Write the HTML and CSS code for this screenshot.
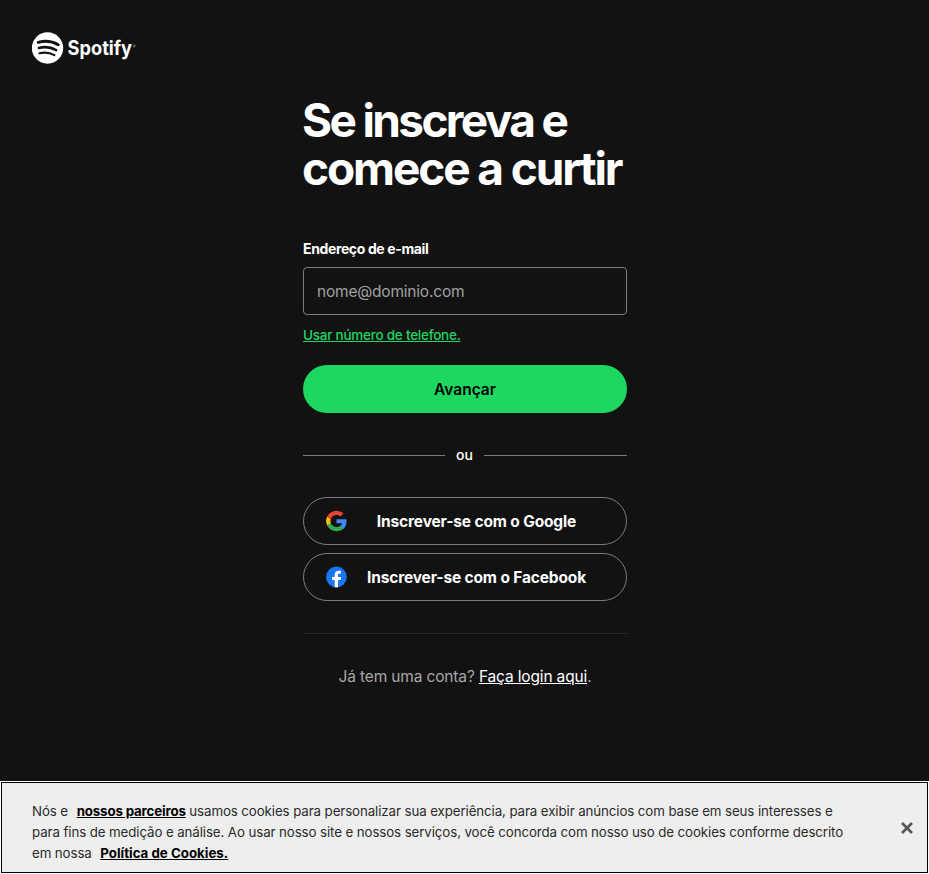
FILE: index.html
```html
<!DOCTYPE html>
<html lang="pt-BR">
<head>
<meta charset="utf-8">
<title>Inscreva-se - Spotify</title>
<link rel="stylesheet" href="styles.css">
</head>
<body>
<div class="page">
  <header class="header">
    <svg class="logo" width="106" height="32" viewBox="0 0 106 32" role="img" aria-label="Spotify">
      <circle cx="15.5" cy="16" r="15.7" fill="#fff"/>
      <g fill="none" stroke="#121212" stroke-linecap="round">
        <path d="M6.200 10.400C12.600 8.700 20.500 9.400 26.200 12.700" stroke-width="3"/>
        <path d="M6.900 16C12.600 14.400 19 15.100 24.200 18.100" stroke-width="2.600"/>
        <path d="M7.500 21.200C12.500 20.100 17.800 20.600 22.400 23.200" stroke-width="2.100"/>
      </g>
      <text class="wordmark" x="35.500" y="23.300" textLength="64.500" lengthAdjust="spacingAndGlyphs">Spotify</text>
      <circle cx="102.300" cy="14" r="1" fill="none" stroke="#aaa" stroke-width=".6"/>
    </svg>
  </header>
  <main class="signup">
    <h1 class="title"><span class="title-first">Se inscreva e</span><br>comece a curtir</h1>
    <form class="form">
      <label class="label" for="email">Endereço de e-mail</label>
      <input class="input" id="email" type="email" placeholder="nome@dominio.com">
      <a class="phone">Usar número de telefone.</a>
      <button class="next" type="button">Avançar</button>
    </form>
    <div class="divider"><span>ou</span></div>
    <div class="providers">
      <button class="provider" type="button">
        <svg width="24" height="24" viewBox="-.5 0 24 24" aria-hidden="true">
          <path fill="#4285f4" d="M22 12.200c0-.7-.1-1.400-.2-2H12v4h5.600a4.800 4.800 0 0 1-2.100 3.100v2.600h3.400c2-1.800 3.100-4.500 3.100-7.700z"/>
          <path fill="#34a853" d="M12 22.200c2.800 0 5.200-.9 6.900-2.500l-3.400-2.600c-.9.600-2.100 1-3.500 1-2.700 0-5-1.800-5.800-4.300H2.700v2.700A10.400 10.400 0 0 0 12 22.200z"/>
          <path fill="#fbbc04" d="M6.200 13.900a6.200 6.200 0 0 1 0-3.900L2.700 7.400a10.300 10.300 0 0 0 0 9.200z"/>
          <path fill="#ea4335" d="M12 5.900c1.500 0 2.900.5 4 1.500l3-2.900A10.400 10.400 0 0 0 2.700 7.400L6.200 10c.8-2.400 3.100-4.100 5.800-4.100z"/>
        </svg>
        <span class="provider-name">Inscrever-se com o Google</span>
      </button>
      <button class="provider" type="button">
        <svg width="24" height="24" viewBox="0 0 24 24" aria-hidden="true">
          <circle cx="12.400" cy="12" r="10.400" fill="#1877f2"/>
          <path fill="#fff" d="M10.700 22.200v-7.100H8v-3h2.700V9.800c0-2.700 1.600-4.100 4-4.100.8 0 1.600.1 2.300.2v2.600h-1.300c-1.300 0-1.700.8-1.700 1.600v2H17l-.5 3H14v7.100a10 10 0 0 1-3.300 0z"/>
        </svg>
        <span class="provider-name">Inscrever-se com o Facebook</span>
      </button>
    </div>
    <p class="login">Já tem uma conta? <a class="login-link">Faça login aqui</a>.</p>
  </main>
  <aside class="cookies">
    <p class="cookie-text">
      <span>Nós e <a class="cookie-link partners">nossos parceiros</a> usamos cookies para personalizar sua experiência, para exibir anúncios com base em seus interesses e</span>
      <span>para fins de medição e análise. Ao usar nosso site e nossos serviços, você concorda com nosso uso de cookies conforme descrito</span>
      <span>em nossa <a class="cookie-link policy">Política de Cookies.</a></span>
    </p>
    <svg class="close" width="12" height="12" viewBox="0 0 12 12" aria-label="Fechar"><path d="M1 1l10 10M11 1L1 11" stroke="#565656" stroke-width="2.600"/></svg>
  </aside>
</div>
</body>
</html>
```
FILE: styles.css
```css
* { box-sizing: border-box; }
body {
  margin: 0;
  background: #121212;
  color: #fff;
  font-family: Inter, "Liberation Sans", sans-serif;
}
.page { height: 874px; display: flex; flex-direction: column; overflow: hidden; }
.header { padding: 32px 32px 0; height: 96px; }
.logo { display: block; }
.wordmark { font: 700 20px Inter, sans-serif; fill: #fff; }
.signup { width: 324px; margin: 0 auto 0 303px; flex: 1; }
.title { margin: 0 0 0 -1px; font-size: 46px; line-height: 48px; font-weight: 700; letter-spacing: -2.100px; white-space: nowrap; }
.title-first { letter-spacing: -2.650px; }
.form { display: flex; flex-direction: column; align-items: flex-start; padding-top: 47px; }
.label { font-size: 14px; line-height: 20px; font-weight: 700; letter-spacing: -.37px; }
.input {
  width: 324px; height: 48px; margin-top: 8px; padding: 0 13px;
  border: 1px solid #7c7c7c; border-radius: 4px; background: #121212;
  font: 400 15.500px Inter, sans-serif; letter-spacing: -.2px; color: #fff; outline: 0;
}
.input::placeholder { color: #a0a0a0; opacity: 1; }
.phone { margin-top: 10px; font-size: 13.500px; line-height: 20px; font-weight: 500; letter-spacing: -.24px; color: #1ed760; text-decoration: underline; white-space: nowrap; }
.next {
  width: 324px; height: 48px; margin-top: 20px; padding: 0; border: 0; border-radius: 24px;
  background: #1ed760; color: #000; font: 600 15.500px Inter, sans-serif;
}
.divider { display: flex; align-items: center; height: 20px; margin-top: 32px; font-size: 14px; line-height: 20px; font-weight: 500; }
.divider::before, .divider::after { content: ""; height: 1px; background: #7c7c7c; }
.divider::before { width: 142px; }
.divider::after { flex: 1; }
.divider span { width: 39px; text-align: center; }
.providers { display: flex; flex-direction: column; gap: 8px; margin-top: 32px; }
.provider {
  display: flex; align-items: center; height: 48px; padding: 0 21px 0 20px;
  border: 1px solid #7c7c7c; border-radius: 24px; background: transparent;
  color: #fff; font: 700 15.500px Inter, sans-serif; letter-spacing: -.15px; white-space: nowrap;
}
.provider svg { flex: none; }
.provider-name { flex: 1; text-align: center; }
.login { margin: 32px 0 0; padding-top: 31px; border-top: 1px solid #292929; font-size: 15.500px; line-height: 24px; letter-spacing: -.15px; text-align: center; color: #a7a7a7; white-space: nowrap; }
.login-link { color: #fff; text-decoration: underline; }
.cookies {
  flex: none; display: flex; align-items: center; justify-content: space-between;
  height: 91px; margin: 0 1px 1px; padding: 0 14px 0 30px;
  border: 1px solid #000; outline: 1px solid #fff; background: #eee; color: #2b2b2b;
}
.cookie-text { margin: 0; padding-top: 10px; font-size: 13.300px; line-height: 21px; letter-spacing: -.1px; white-space: nowrap; }
.cookie-text > span { display: block; }
.cookie-link { margin-left: 5px; color: #000; font-weight: 700; text-decoration: underline; }
.partners { letter-spacing: -.15px; }
.policy { letter-spacing: 0; }
```
